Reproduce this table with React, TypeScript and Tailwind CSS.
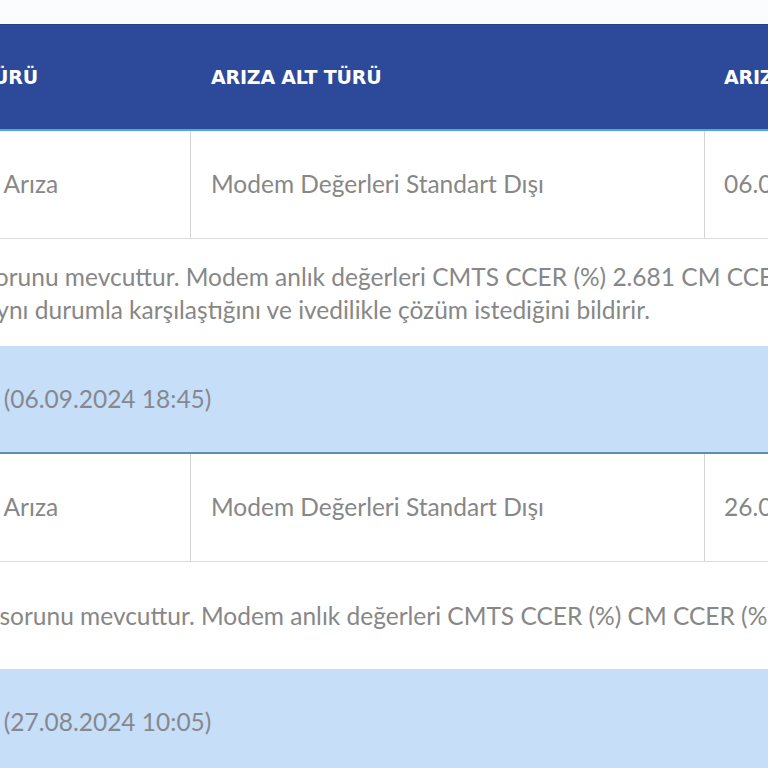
const rows = [
  {
    type: 'Bağlantı Arıza',
    subType: 'Modem Değerleri Standart Dışı',
    date: '06.09.2024 18:30',
    lines: [
      { text: 'Kopukluk sorunu mevcuttur. Modem anlık değerleri CMTS CCER (%) 2.681 CM CCER (%) 0.000', className: '-ml-[33px]' },
      { text: 'Kullanıcı aynı durumla karşılaştığını ve ivedilikle çözüm istediğini bildirir.', className: '-ml-[22px]' },
    ],
    note: 'Giderildi (06.09.2024 18:45)',
  },
  {
    type: 'Bağlantı Arıza',
    subType: 'Modem Değerleri Standart Dışı',
    date: '26.08.2024 14:12',
    lines: [
      { text: 'Bağlantı sorunu mevcuttur. Modem anlık değerleri CMTS CCER (%) CM CCER (%) 0.000', className: '-ml-[4px]' },
    ],
    note: 'Giderildi (27.08.2024 10:05)',
  },
];

export default function App() {
  return (
    <div className="w-[768px] h-[768px] overflow-hidden bg-white font-['Lato',sans-serif]">
      <div className="h-[24px] bg-[#fbfcfd]" />
      <div className="-ml-[110px] w-[1200px]">
        {/* Header */}
        <div className="flex h-[107px] items-center bg-[#2c4a99] border-t border-[#23408a] border-b-[2px] border-b-[#4fa9dc] text-white font-bold text-[19px] tracking-[-0.2px] font-['DejaVu_Sans',sans-serif]">
          <div className="w-[301px] pl-[20px]">ARIZA TÜRÜ</div>
          <div className="w-[514px] pl-[20px]">ARIZA ALT TÜRÜ</div>
          <div className="flex-1 pl-[19px]">ARIZA TARİHİ</div>
        </div>

        {rows.map((row) => (
          <div key={row.date}>
            <div className="flex h-[108px] border-b border-[#dcdcdc] text-[24.5px] text-[#878787]">
              <div className="w-[301px] pl-[21px] flex items-center border-r border-[#d4d4d4]">{row.type}</div>
              <div className="w-[514px] pl-[20px] flex items-center border-r border-[#d4d4d4]">{row.subType}</div>
              <div className="flex-1 pl-[19px] flex items-center">{row.date}</div>
            </div>
            <div className="flex h-[107px] flex-col justify-center pl-[20px] text-[24.5px] leading-[33px] text-[#878787] whitespace-nowrap">
              {row.lines.map((line) => (
                <div key={line.text} className={line.className}>{line.text}</div>
              ))}
            </div>
            <div className="flex h-[108px] items-center pl-[17px] bg-[#c6def8] border-b-[2px] border-[#5b8fae] text-[24.5px] text-[#85898f]">
              {row.note}
            </div>
          </div>
        ))}
      </div>
    </div>
  );
}
